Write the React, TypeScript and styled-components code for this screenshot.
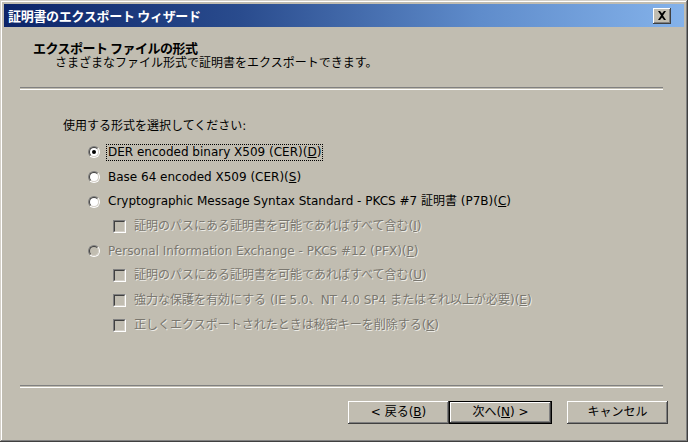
import React from "react";
import styled, { createGlobalStyle } from "styled-components";

const Global = createGlobalStyle`
  html, body { margin: 0; padding: 0; background: #c1bdb1; }
  body { font-family: "DejaVu Sans", "Noto Sans CJK JP", sans-serif; font-size: 12px; color: #000; }
`;

const FACE = "#c1bdb1";

const Window = styled.div`
  box-sizing: border-box;
  width: 688px;
  height: 442px;
  padding: 4px;
  background: ${FACE};
  display: flex;
  flex-direction: column;
  box-shadow: inset -1px -1px #404040, inset 1px 1px #d4d0c8,
    inset -2px -2px #808080, inset 2px 2px #ffffff;
`;

const TitleBar = styled.div`
  height: 23px;
  flex: none;
  display: flex;
  align-items: center;
  padding: 0 3px 0 4px;
  background: linear-gradient(to right, #0c2468 0%, #2a4c8e 35%, #5f8ccb 70%, #84b2ea 100%);
`;

const TitleText = styled.div`
  flex: 1;
  color: #fff;
  font-family: "Noto Sans CJK JP", sans-serif;
  font-weight: bold;
  font-size: 13px;
  letter-spacing: -0.3px;
  line-height: 23px;
`;

const CloseButton = styled.div`
  width: 18px;
  height: 16px;
  box-sizing: border-box;
  background: ${FACE};
  display: flex;
  align-items: center;
  justify-content: center;
  margin-right: 10px;
  box-shadow: inset -1px -1px #404040, inset 1px 1px #ffffff,
    inset -2px -2px #808080;
`;

const Body = styled.div`
  flex: 1;
  display: flex;
  flex-direction: column;
`;

const Header = styled.div`
  padding: 12px 0 0 29px;
`;

const HeaderTitle = styled.div`
  font-family: "Noto Sans CJK JP", sans-serif;
  font-weight: bold;
  font-size: 13px;
  letter-spacing: -0.5px;
  line-height: 17px;
`;

const HeaderSub = styled.div`
  padding-left: 22px;
  line-height: 15px;
`;

const Separator = styled.div<{ $top: number }>`
  margin: ${(p) => p.$top}px 21px 0 16px;
  height: 1px;
  border-top: 1px solid #808080;
  border-bottom: 1px solid #ffffff;
`;

const Content = styled.div`
  padding: 28px 0 0 59px;
  display: flex;
  flex-direction: column;
`;

const Prompt = styled.div`
  line-height: 16px;
  margin-bottom: 6px;
`;

const Row = styled.div<{ $indent: number; $disabled?: boolean }>`
  height: 24.7px;
  display: flex;
  align-items: center;
  padding-left: ${(p) => p.$indent}px;
  color: ${(p) => (p.$disabled ? "#7a776f" : "#000")};
  text-shadow: ${(p) => (p.$disabled ? "1px 1px 0 #ecebe6" : "none")};
  white-space: nowrap;
`;

const Radio = styled.span`
  box-sizing: border-box;
  width: 12px;
  height: 12px;
  border-radius: 50%;
  border: 1px solid;
  border-color: #808080 #ffffff #ffffff #808080;
  display: inline-flex;
  margin-right: 7px;
  flex: none;
`;

const RadioInner = styled.span<{ $disabled?: boolean }>`
  box-sizing: border-box;
  flex: 1;
  border-radius: 50%;
  border: 1px solid;
  border-color: #404040 #d4d0c8 #d4d0c8 #404040;
  background: ${(p) => (p.$disabled ? FACE : "#ffffff")};
  display: flex;
  align-items: center;
  justify-content: center;
`;

const Dot = styled.span`
  width: 4px;
  height: 4px;
  border-radius: 50%;
  background: #000;
`;

const Check = styled.span`
  box-sizing: border-box;
  width: 13px;
  height: 13px;
  border: 1px solid;
  border-color: #808080 #ffffff #ffffff #808080;
  display: inline-flex;
  margin-right: 7px;
  flex: none;
`;

const CheckInner = styled.span`
  flex: 1;
  border: 1px solid;
  border-color: #404040 #d4d0c8 #d4d0c8 #404040;
  background: ${FACE};
`;

const Label = styled.span<{ $focus?: boolean }>`
  padding: 0 1px;
  line-height: 15px;
  outline: ${(p) => (p.$focus ? "1px dotted #000" : "none")};
  outline-offset: 0;
`;

const Footer = styled.div`
  margin-top: auto;
  display: flex;
  flex-direction: column;
  padding-bottom: 14px;
`;

const ButtonRow = styled.div`
  display: flex;
  justify-content: flex-end;
  padding: 13px 16px 0 0;
`;

const Button = styled.div<{ $w: number; $default?: boolean; $gap?: number }>`
  box-sizing: border-box;
  width: ${(p) => p.$w}px;
  height: 23px;
  margin-left: ${(p) => p.$gap ?? 0}px;
  display: flex;
  align-items: center;
  justify-content: center;
  background: ${FACE};
  line-height: 15px;
  white-space: pre;
  box-shadow: ${(p) =>
    p.$default
      ? "inset 0 0 0 1px #000, inset -2px -2px #404040, inset 2px 2px #ffffff, inset -3px -3px #808080"
      : "inset -1px -1px #404040, inset 1px 1px #ffffff, inset -2px -2px #808080"};
`;

type Item =
  | { kind: "radio"; text: React.ReactNode; checked?: boolean; disabled?: boolean; focus?: boolean }
  | { kind: "check"; text: React.ReactNode; disabled?: boolean };

const items: Item[] = [
  { kind: "radio", checked: true, focus: true, text: <>DER encoded binary X509 (CER)(<u>D</u>)</> },
  { kind: "radio", text: <>Base 64 encoded X509 (CER)(<u>S</u>)</> },
  { kind: "radio", text: <>Cryptographic Message Syntax Standard - PKCS #7 証明書 (P7B)(<u>C</u>)</> },
  { kind: "check", disabled: true, text: <>証明のパスにある証明書を可能であればすべて含む(<u>I</u>)</> },
  { kind: "radio", disabled: true, text: <>Personal Information Exchange - PKCS #12 (PFX)(<u>P</u>)</> },
  { kind: "check", disabled: true, text: <>証明のパスにある証明書を可能であればすべて含む(<u>U</u>)</> },
  { kind: "check", disabled: true, text: <>強力な保護を有効にする (IE 5.0、NT 4.0 SP4 またはそれ以上が必要)(<u>E</u>)</> },
  { kind: "check", disabled: true, text: <>正しくエクスポートされたときは秘密キーを削除する(<u>K</u>)</> },
];

export default function App() {
  return (
    <>
      <Global />
      <Window>
        <TitleBar>
          <TitleText>証明書のエクスポート ウィザード</TitleText>
          <CloseButton>
            <svg width="10" height="9" viewBox="0 0 10 9">
              <path d="M1 0h2l2 2.5L7 0h2L6 4.5 9 9H7L5 6.5 3 9H1l3-4.5z" fill="#000" />
            </svg>
          </CloseButton>
        </TitleBar>
        <Body>
          <Header>
            <HeaderTitle>エクスポート ファイルの形式</HeaderTitle>
            <HeaderSub>さまざまなファイル形式で証明書をエクスポートできます。</HeaderSub>
          </Header>
          <Separator $top={16} />
          <Content>
            <Prompt>使用する形式を選択してください:</Prompt>
            {items.map((it, i) =>
              it.kind === "radio" ? (
                <Row key={i} $indent={25} $disabled={it.disabled}>
                  <Radio>
                    <RadioInner $disabled={it.disabled}>{it.checked && <Dot />}</RadioInner>
                  </Radio>
                  <Label $focus={it.focus}>{it.text}</Label>
                </Row>
              ) : (
                <Row key={i} $indent={50} $disabled={it.disabled}>
                  <Check>
                    <CheckInner />
                  </Check>
                  <Label>{it.text}</Label>
                </Row>
              )
            )}
          </Content>
          <Footer>
            <Separator $top={0} />
            <ButtonRow>
              <Button $w={101}>{"< "}戻る(<u>B</u>)</Button>
              <Button $w={103} $default>次へ(<u>N</u>){" >"}</Button>
              <Button $w={101} $gap={15}>キャンセル</Button>
            </ButtonRow>
          </Footer>
        </Body>
      </Window>
    </>
  );
}
